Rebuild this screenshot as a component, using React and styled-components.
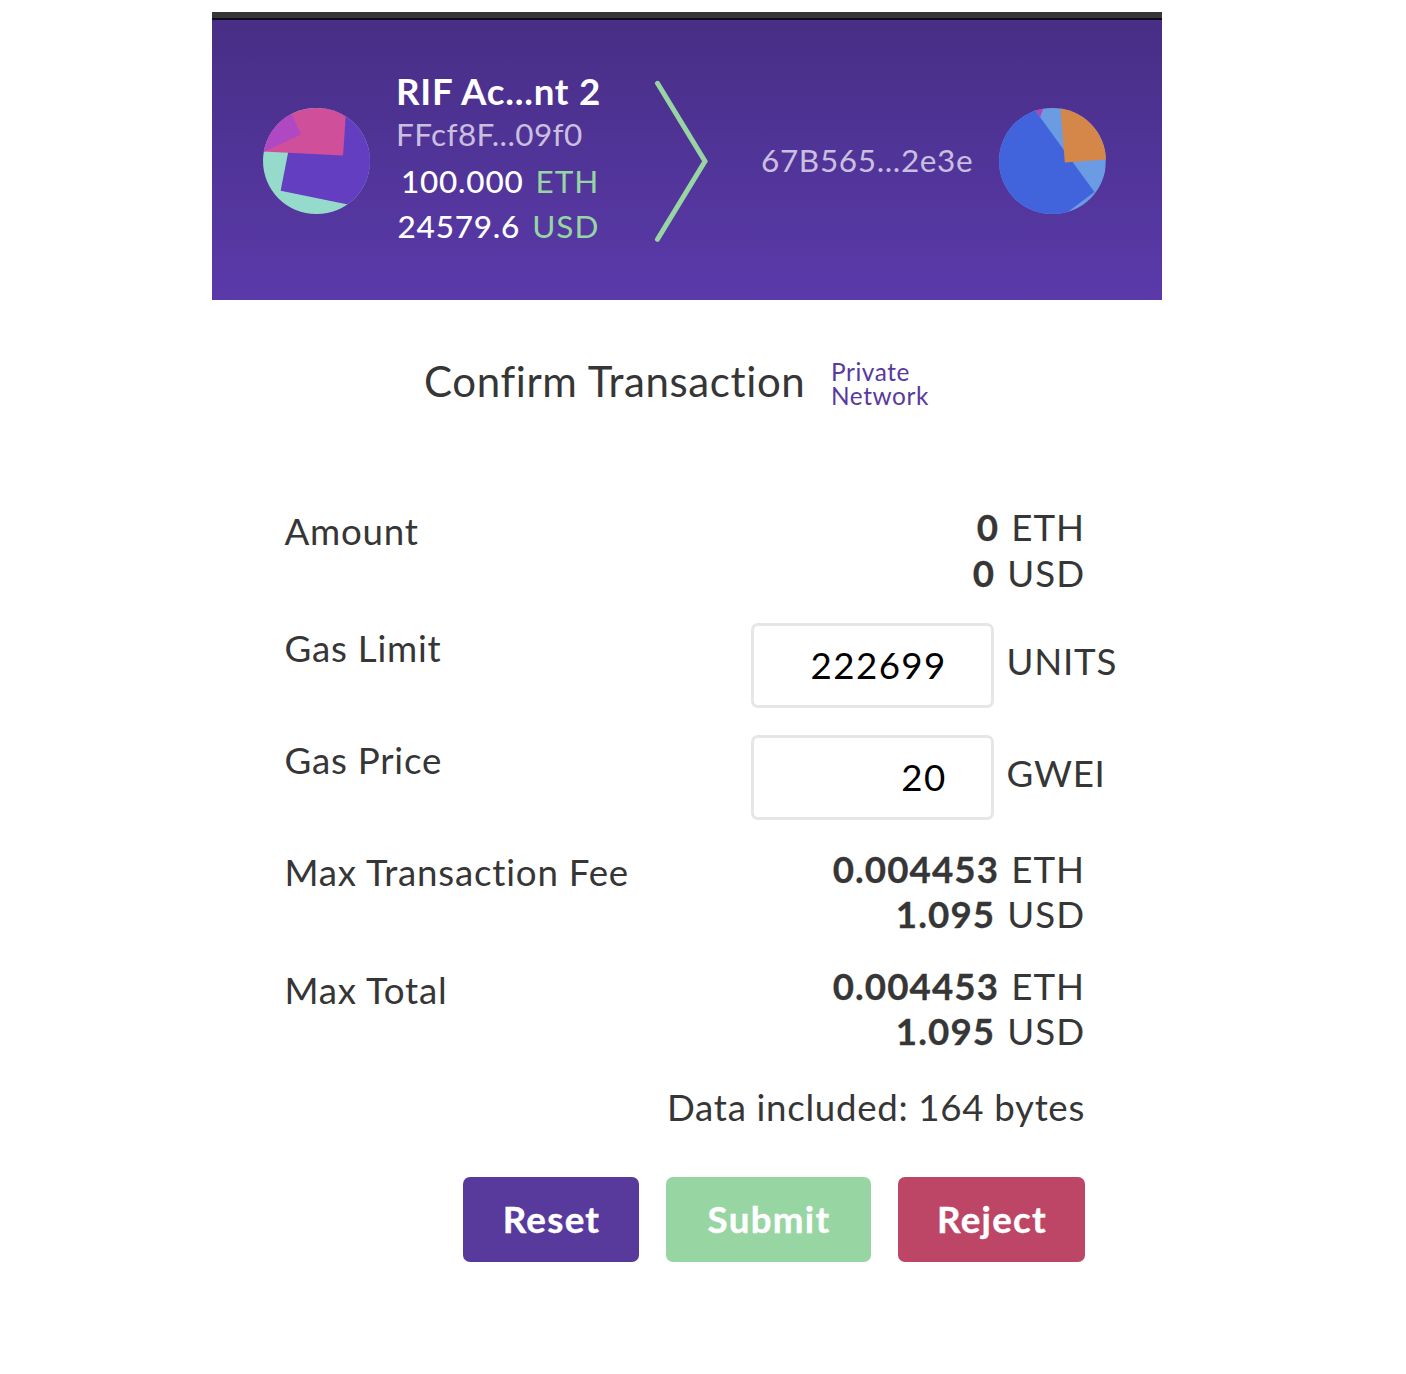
import React, { useState } from 'react';
import styled, { createGlobalStyle, ThemeProvider } from 'styled-components';

const theme = {
  font: 'Lato, "Noto Sans", sans-serif',
  ink: '#363636',
  purple: '#58399c',
  green: '#97d5a2',
  red: '#bd4566',
};

const Global = createGlobalStyle`
  *, *::before, *::after { box-sizing: border-box; }
  body { margin: 0; background: #fff; }
`;

const Window = styled.main`
  width: 950px;
  margin: 12px 0 0 212px;
  font-family: ${(p) => p.theme.font};
  color: ${(p) => p.theme.ink};
  white-space: nowrap;
`;

const TitleBar = styled.div`
  height: 8px;
  background: #363636;
  border-bottom: 2px solid #100b1c;
`;

const Header = styled.header`
  display: flex;
  align-items: flex-start;
  height: 279.6px;
  padding: 0 56px 0 51px;
  background: linear-gradient(#482e86, #5a3aaa);
`;

const Identicon = styled.svg`
  flex: none;
  display: block;
  width: 106.7px;
  height: 106.7px;
  margin-top: 87.8px;
  border-radius: 50%;
`;

const Sender = styled.div`
  display: flex;
  flex-direction: column;
  width: 204px;
  margin: 49.4px 0 0 26.3px;
`;

const Name = styled.div`
  font-size: 36.7px;
  line-height: 45.3px;
  font-weight: 700;
  letter-spacing: 0.76px;
  color: #fff;
`;

const Address = styled.div`
  font-size: 31.5px;
  line-height: 38px;
  letter-spacing: ${(p) => p.$tracking};
  color: #cabfe0;
`;

const Balances = styled.div`
  margin-top: 6px;
`;

const Balance = styled.div`
  display: flex;
  justify-content: flex-end;
  gap: 12px;
  font-size: 31.5px;
  line-height: 45.3px;
  font-weight: 500;
  letter-spacing: 0.8px;
  color: #fff;
`;

const Currency = styled.span`
  padding-right: 0.6px;
  font-weight: 400;
  letter-spacing: 1px;
  color: ${(p) => p.theme.green};
`;

const Arrow = styled.svg`
  flex: none;
  display: block;
  width: 56px;
  height: 166px;
  margin: 58px 0 0 54px;
  fill: none;
  stroke: ${(p) => p.theme.green};
  stroke-width: 5;
  stroke-linecap: round;
`;

const Recipient = styled.div`
  display: flex;
  margin-left: auto;
  gap: 26px;

  ${Address} { margin-top: 120.8px; }
`;

const Heading = styled.div`
  display: flex;
  align-items: flex-start;
  padding: 60px 0 0 212px;
`;

const Title = styled.h1`
  margin: 0;
  font-size: 42px;
  line-height: 42px;
  font-weight: 400;
  letter-spacing: 0.62px;
`;

const Network = styled.div`
  margin-left: 25.5px;
  font-size: 24.4px;
  line-height: 24px;
  letter-spacing: 0.6px;
  color: ${(p) => p.theme.purple};
`;

const Form = styled.form`
  display: flex;
  flex-direction: column;
  gap: 26.67px;
  margin-top: 97.7px;
  padding: 0 77px 0 72.5px;
  font-size: 36.7px;
  line-height: 45.33px;
  letter-spacing: 0.77px;
`;

const Row = styled.div`
  display: flex;
  justify-content: space-between;
  align-items: flex-start;
`;

const Label = styled.label`
  padding-top: 3.7px;
`;

const Amounts = styled.div`
  display: flex;
  flex-direction: column;
  align-items: flex-end;
`;

const Figure = styled.div`
  display: flex;
  gap: 12.2px;
`;

const Amount = styled.b`
  font-weight: 700;
  letter-spacing: 1.1px;
  -webkit-text-stroke: 0.3px currentColor;
`;

const Unit = styled.span`
  letter-spacing: 0.95px;
`;

const Field = styled.div`
  display: flex;
  align-items: flex-start;
  width: 334px;
`;

const Input = styled.input`
  flex: none;
  width: 242.7px;
  height: 85.33px;
  padding: 0 44px 0 10px;
  border: 3px solid #e6e6e6;
  border-radius: 7px;
  outline: 0;
  background: #fff;
  color: #000;
  font: 400 36.7px ${(p) => p.theme.font};
  letter-spacing: 1.4px;
  text-align: right;
`;

const Suffix = styled.span`
  margin: 16px 0 0 12.8px;
`;

const Note = styled.div`
  padding-top: 3.7px;
  text-align: right;
  letter-spacing: 0.68px;
`;

const Actions = styled.div`
  display: flex;
  justify-content: flex-end;
  gap: 27px;
  margin-top: 19.7px;
`;

const Button = styled.button`
  width: ${(p) => p.$width}px;
  height: 85.3px;
  padding: 0 0 0 1px;
  border: 0;
  border-radius: 7px;
  background: ${(p) => p.theme[p.$tone]};
  color: #fff;
  font: 700 36.7px ${(p) => p.theme.font};
  letter-spacing: 1.3px;
  -webkit-text-stroke: 0.4px currentColor;
`;

const SenderIcon = () => (
  <Identicon viewBox="0 0 107 107">
    <rect width="107" height="107" fill="#96dacb" />
    <path d="M28 30 17.7 83 120 104V0H60Z" fill="#643ec0" />
    <path d="M83.5 0 80.3 47.7-3 43.5V-5H83.5Z" fill="#cf4f9b" />
    <path d="M25.5-1 38 26.7 0 44.3-5 0Z" fill="#b048c4" />
  </Identicon>
);

const RecipientIcon = () => (
  <Identicon viewBox="0 0 107 107">
    <rect width="107" height="107" fill="#6b9be2" />
    <path d="M46-4 41.3 9 36 2 34-4Z" fill="#b046b0" />
    <path d="M34-.7 95.7 84.3 65 107.3-5 110V-5Z" fill="#4164dc" />
    <path d="M61.3-5 66 54.7 120 50.7V-5Z" fill="#d5874a" />
  </Identicon>
);

const Value = ({ amount, unit }) => (
  <Figure>
    <Amount>{amount}</Amount>
    <Unit>{unit}</Unit>
  </Figure>
);

const AmountRow = ({ label, eth, usd }) => (
  <Row>
    <Label as="span">{label}</Label>
    <Amounts>
      <Value amount={eth} unit="ETH" />
      <Value amount={usd} unit="USD" />
    </Amounts>
  </Row>
);

const InputRow = ({ id, label, value, onChange, unit }) => (
  <Row>
    <Label htmlFor={id}>{label}</Label>
    <Field>
      <Input id={id} value={value} onChange={(e) => onChange(e.target.value)} />
      <Suffix>{unit}</Suffix>
    </Field>
  </Row>
);

export default function App() {
  const [gasLimit, setGasLimit] = useState('222699');
  const [gasPrice, setGasPrice] = useState('20');

  return (
    <ThemeProvider theme={theme}>
      <Global />
      <Window>
        <TitleBar />
        <Header>
          <SenderIcon />
          <Sender>
            <Name>RIF Ac...nt 2</Name>
            <Address $tracking="0.39px">FFcf8F...09f0</Address>
            <Balances>
              <Balance>100.000 <Currency>ETH</Currency></Balance>
              <Balance>24579.6 <Currency>USD</Currency></Balance>
            </Balances>
          </Sender>
          <Arrow viewBox="0 0 56 166">
            <path d="M3.5 5.3 51 83.3 3.5 161.3" />
          </Arrow>
          <Recipient>
            <Address $tracking="0.65px">67B565...2e3e</Address>
            <RecipientIcon />
          </Recipient>
        </Header>
        <Heading>
          <Title>Confirm Transaction</Title>
          <Network>Private<br />Network</Network>
        </Heading>
        <Form>
          <AmountRow label="Amount" eth="0" usd="0" />
          <InputRow id="gas-limit" label="Gas Limit" value={gasLimit} onChange={setGasLimit} unit="UNITS" />
          <InputRow id="gas-price" label="Gas Price" value={gasPrice} onChange={setGasPrice} unit="GWEI" />
          <AmountRow label="Max Transaction Fee" eth="0.004453" usd="1.095" />
          <AmountRow label="Max Total" eth="0.004453" usd="1.095" />
          <Note>Data included: 164 bytes</Note>
          <Actions>
            <Button type="button" $tone="purple" $width={176}>Reset</Button>
            <Button type="button" $tone="green" $width={205}>Submit</Button>
            <Button type="button" $tone="red" $width={187}>Reject</Button>
          </Actions>
        </Form>
      </Window>
    </ThemeProvider>
  );
}
